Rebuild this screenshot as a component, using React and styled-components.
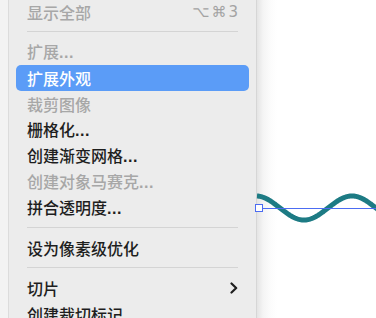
import React from 'react'
import styled, { createGlobalStyle } from 'styled-components'

const GlobalStyle = createGlobalStyle`
  html, body {
    margin: 0;
    padding: 0;
    width: 376px;
    height: 318px;
    overflow: hidden;
    background: #ffffff;
  }
`

const Page = styled.div`
  display: flex;
  width: 376px;
  height: 318px;
  overflow: hidden;
  font-family: "Noto Sans CJK SC", "Noto Sans", sans-serif;
`

const Gutter = styled.div`
  width: 8px;
  flex: none;
  background: #f3f3f3;
  border-right: 1px solid #dcdcdc;
`

const Menu = styled.div`
  width: 247px;
  flex: none;
  margin-top: -1px;
  background: #ececec;
  border-right: 1px solid #d6d6d6;
  display: flex;
  flex-direction: column;
`

const Item = styled.div`
  height: 26px;
  margin: 0 7px;
  padding: 0 11px;
  border-radius: 5px;
  display: flex;
  align-items: center;
  justify-content: space-between;
  flex: none;
  font-size: 16px;
  font-weight: 500;
  line-height: 26px;
  white-space: nowrap;
  color: ${p => (p.$active ? '#ffffff' : p.$disabled ? '#a7a7a7' : '#1e1e1e')};
  background: ${p => (p.$active ? '#5b9cf7' : 'transparent')};
`

const Dots = styled.span`
  font-family: "Liberation Sans", sans-serif;
  font-weight: 700;
  letter-spacing: 0.5px;
`

const Shortcut = styled.span`
  font-family: "DejaVu Sans", sans-serif;
  font-size: 15px;
  font-weight: 400;
  color: #a3a3a3;
  letter-spacing: 2px;
  margin-right: -2px;
`

const Separator = styled.div`
  height: 1px;
  flex: none;
  margin: 6px 18px 7px;
  background: #d4d4d4;
`

const Canvas = styled.div`
  flex: 1;
  position: relative;
  background: linear-gradient(to right, #e4e4e4 0, #f4f4f4 6px, #fcfcfc 14px, #ffffff 20px);
`

const Artwork = styled.svg`
  display: block;
  overflow: visible;
`

function Label ({ text }) {
  if (text.endsWith('...')) {
    return <span>{text.slice(0, -3)}<Dots>...</Dots></span>
  }
  return <span>{text}</span>
}

function Chevron () {
  return (
    <svg width="8" height="12" viewBox="0 0 8 12">
      <path d="M1.5 1.5 L6.2 6 L1.5 10.5" fill="none" stroke="#1e1e1e" strokeWidth="2.2" strokeLinecap="round" strokeLinejoin="round" />
    </svg>
  )
}

function wavePath () {
  const pts = []
  for (let x = 0; x <= 125; x += 1) {
    const y = 208 - 12 * Math.cos((2 * Math.PI * (x + 1)) / 96)
    pts.push(`${x === 0 ? 'M' : 'L'}${x} ${y.toFixed(2)}`)
  }
  return pts.join(' ')
}

const items = [
  { text: '显示全部', disabled: true, shortcut: '⌥⌘3' },
  { sep: true },
  { text: '扩展...', disabled: true },
  { text: '扩展外观', active: true },
  { text: '裁剪图像', disabled: true },
  { text: '栅格化...' },
  { text: '创建渐变网格...' },
  { text: '创建对象马赛克...', disabled: true },
  { text: '拼合透明度...' },
  { sep: true },
  { text: '设为像素级优化' },
  { sep: true },
  { text: '切片', submenu: true },
  { text: '创建裁切标记' },
]

export default function App () {
  return (
    <Page>
      <GlobalStyle />
      <Gutter />
      <Menu>
        {items.map((it, i) =>
          it.sep
            ? <Separator key={i} />
            : (
              <Item key={i} $active={it.active} $disabled={it.disabled}>
                <Label text={it.text} />
                {it.shortcut && <Shortcut>{it.shortcut}</Shortcut>}
                {it.submenu && <Chevron />}
              </Item>
            )
        )}
      </Menu>
      <Canvas>
        <Artwork width="119" height="318">
          <path d={wavePath()} fill="none" stroke="#1d7b84" strokeWidth="5" />
          <line x1="5" y1="208.5" x2="119" y2="208.5" stroke="#4c6cf2" strokeWidth="1" />
          <rect x="-1.5" y="204.5" width="7" height="7" fill="#ffffff" stroke="#4c6cf2" strokeWidth="1" />
        </Artwork>
      </Canvas>
    </Page>
  )
}
